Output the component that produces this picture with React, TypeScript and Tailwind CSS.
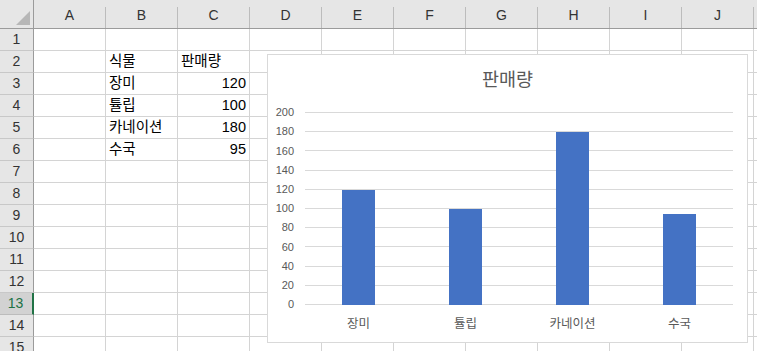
const columns = ['A', 'B', 'C', 'D', 'E', 'F', 'G', 'H', 'I', 'J', ''];
const rowCount = 15;

const cells: Record<string, { text: string; align: 'left' | 'right' }> = {
  'B2': { text: '식물', align: 'left' },
  'C2': { text: '판매량', align: 'left' },
  'B3': { text: '장미', align: 'left' },
  'C3': { text: '120', align: 'right' },
  'B4': { text: '튤립', align: 'left' },
  'C4': { text: '100', align: 'right' },
  'B5': { text: '카네이션', align: 'left' },
  'C5': { text: '180', align: 'right' },
  'B6': { text: '수국', align: 'left' },
  'C6': { text: '95', align: 'right' },
};

const sales = [
  { name: '장미', value: 120 },
  { name: '튤립', value: 100 },
  { name: '카네이션', value: 180 },
  { name: '수국', value: 95 },
];

const ticks = [200, 180, 160, 140, 120, 100, 80, 60, 40, 20, 0];

function HeaderRow() {
  return (
    <div className="flex h-[29px] shrink-0 bg-[#e6e6e6] border-b border-[#9b9b9b]">
      <div className="w-[34px] shrink-0 flex items-end justify-end border-r border-[#9b9b9b] pb-[3px] pr-[3px]">
        <div className="w-0 h-0 border-l-[14px] border-l-transparent border-b-[14px] border-b-[#b7b7b7]" />
      </div>
      {columns.map((col, i) => (
        <div key={i} className="w-[72px] shrink-0 flex">
          <div className="flex-1 flex items-center justify-center pt-[2px] text-[14px] text-[#333]">{col}</div>
          {col && <div className="w-px h-[21px] self-end bg-[#bcbcbc]" />}
        </div>
      ))}
    </div>
  );
}

function Row({ n }: { n: number }) {
  const active = n === 13;
  return (
    <div className="flex h-[22px] shrink-0">
      <div
        className={
          active
            ? 'w-[34px] shrink-0 flex items-center justify-center bg-[#d2d2d2] text-[#217346] border-b border-[#bcbcbc] border-r-2 border-r-[#217346] text-[14px] pr-px'
            : 'w-[34px] shrink-0 flex items-center justify-center bg-[#e6e6e6] text-[#333] border-b border-[#c8c8c8] border-r border-r-[#9b9b9b] text-[14px]'
        }
      >
        {n}
      </div>
      {columns.map((col, i) => {
        const cell = cells[col + n];
        return (
          <div
            key={i}
            className={
              'w-[72px] shrink-0 border-b border-r border-[#d4d4d4] flex items-center px-[3px] text-[14.5px] text-black ' +
              (cell?.align === 'right' ? 'justify-end' : 'justify-start')
            }
          >
            {cell?.text}
          </div>
        );
      })}
    </div>
  );
}

function SalesChart() {
  return (
    <div className="absolute left-[267px] top-[54px] w-[481px] h-[289px] bg-white border border-[#d9d9d9] flex flex-col text-[#595959]">
      <div className="h-[45px] pt-[12px] text-center text-[18.5px] leading-[26px]">판매량</div>
      <div className="flex h-[193px] mt-[12px]">
        <div className="w-[25px] ml-[1px] flex flex-col justify-between text-[11px]">
          {ticks.map((t) => (
            <div key={t} className="h-px flex items-center justify-end">
              {t}
            </div>
          ))}
        </div>
        <div className="relative w-[428px] ml-[11px]">
          <div className="absolute inset-0 flex flex-col justify-between">
            {ticks.map((t) => (
              <div key={t} className="h-px bg-[#d9d9d9]" />
            ))}
          </div>
          <div className="absolute inset-0 flex">
            {sales.map((s) => (
              <div key={s.name} className="flex-1 flex items-end justify-center">
                <div className="w-[33px] bg-[#4472c4]" style={{ height: s.value * 0.96 }} />
              </div>
            ))}
          </div>
        </div>
      </div>
      <div className="flex ml-[37px] w-[428px] mt-[10px] text-[12.5px]">
        {sales.map((s) => (
          <div key={s.name} className="flex-1 text-center">
            {s.name}
          </div>
        ))}
      </div>
    </div>
  );
}

export default function App() {
  return (
    <div
      className="relative w-[757px] h-[351px] overflow-hidden bg-white flex flex-col"
      style={{ fontFamily: '"Liberation Sans", "Noto Sans CJK KR", sans-serif' }}
    >
      <HeaderRow />
      {Array.from({ length: rowCount }, (_, i) => (
        <Row key={i} n={i + 1} />
      ))}
      <SalesChart />
    </div>
  );
}
